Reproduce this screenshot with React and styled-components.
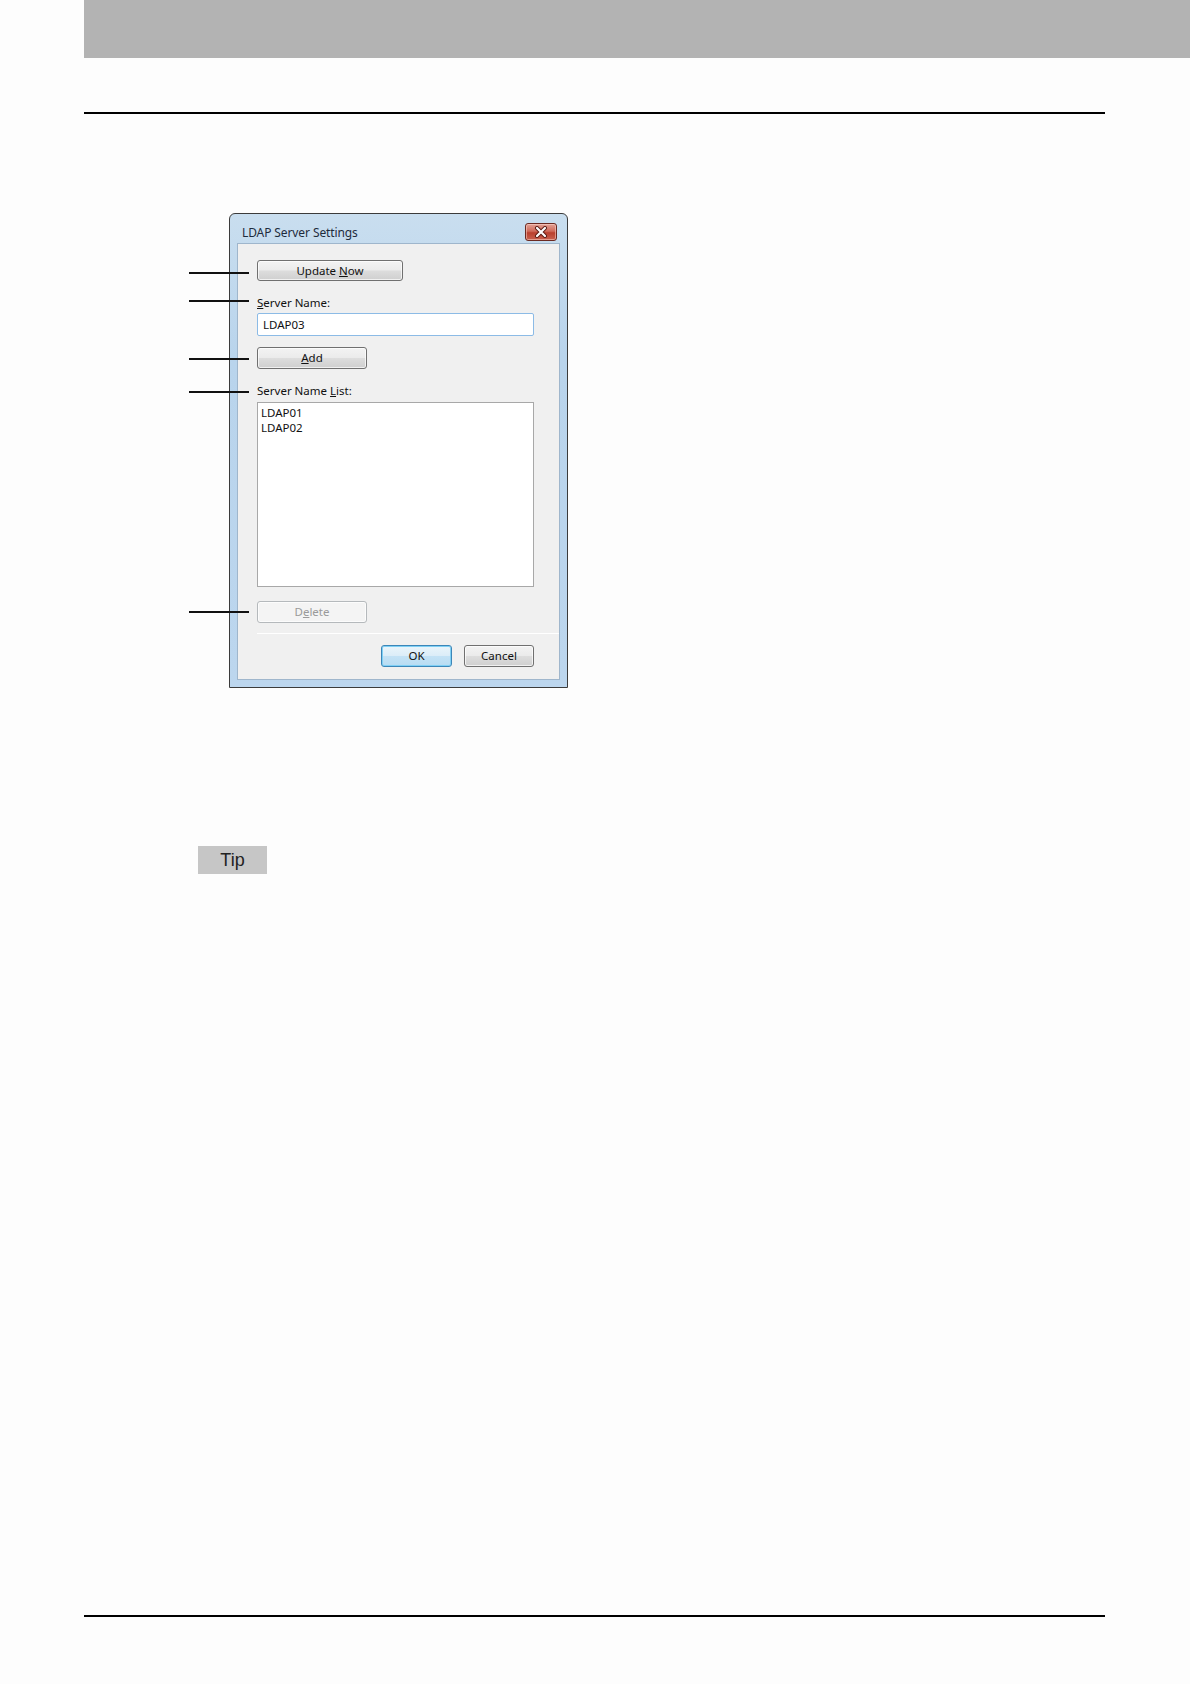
import React from "react";
import styled, { createGlobalStyle } from "styled-components";

const Global = createGlobalStyle`
  html, body {
    margin: 0;
    padding: 0;
    background: #fdfdfd;
  }
  * {
    box-sizing: border-box;
  }
`;

const Page = styled.div`
  width: 1190px;
  height: 1684px;
  padding-left: 84px;
  display: flex;
  flex-direction: column;
  font-family: "Liberation Sans", Arial, sans-serif;
`;

const HeaderBand = styled.div`
  height: 58px;
  background: #b3b3b3;
`;

const Rule = styled.div`
  width: 1021px;
  height: 2px;
  background: #000;
  margin-top: ${(p) => p.top || 0};
  margin-bottom: ${(p) => p.bottom || 0};
`;

const Figure = styled.div`
  position: relative;
  margin-top: 99px;
  padding-left: 145px;
`;

// callout leader lines laid over the dialog edge
const Leader = styled.div`
  position: absolute;
  left: 105px;
  width: 60px;
  height: 2px;
  background: #111;
  z-index: 2;
`;

const Window = styled.div`
  width: 339px;
  height: 475px;
  border: 1px solid #3b3b3b;
  border-radius: 6px 6px 0 0;
  background: linear-gradient(#c9deef, #b9d4ec 30%, #bcd6ee);
  padding: 0 7px 7px 7px;
  display: flex;
  flex-direction: column;
  font-family: "Noto Sans", "Open Sans", sans-serif;
`;

const TitleBar = styled.div`
  height: 29px;
  display: flex;
  align-items: flex-start;
  justify-content: space-between;
  padding: 0 3px 0 5px;
`;

const Title = styled.div`
  margin-top: 10px;
  font-size: 12px;
  color: #1e2b3c;
  letter-spacing: -0.1px;
`;

const Close = styled.div`
  margin-top: 9px;
  width: 32px;
  height: 18px;
  border: 1px solid #6b2a22;
  border-radius: 3px;
  background: linear-gradient(#e3a296, #cf6a5a 45%, #b9402e 55%, #c9614f);
  display: flex;
  align-items: center;
  justify-content: center;
  box-shadow: inset 0 0 0 1px rgba(255, 220, 210, 0.5);
`;

const Client = styled.div`
  flex: 1;
  background: #f0f0f0;
  border: 1px solid #9fb6cc;
  padding: 16px 0 0 19px;
  display: flex;
  flex-direction: column;
  align-items: flex-start;
  font-size: 11.5px;
  color: #111;
`;

const Button = styled.div`
  width: ${(p) => p.w}px;
  height: ${(p) => p.h || 22}px;
  margin-top: ${(p) => p.mt || 0}px;
  border: 1px solid ${(p) => (p.disabled ? "#b5b9bc" : p.focus ? "#3c86b8" : "#707070")};
  border-radius: 3px;
  background: ${(p) =>
    p.disabled
      ? "#f4f4f4"
      : p.focus
      ? "linear-gradient(#eaf5fb, #dcedf8 48%, #c3e2f5 52%, #b8dcf3)"
      : "linear-gradient(#f3f3f3, #ebebeb 48%, #dddddd 52%, #cfcfcf)"};
  box-shadow: ${(p) =>
    p.focus ? "inset 0 0 0 1px #7fd0f5" : "inset 0 0 0 1px rgba(255,255,255,0.7)"};
  color: ${(p) => (p.disabled ? "#9a9a9a" : "#111")};
  display: flex;
  align-items: center;
  justify-content: center;
  font-size: 11.5px;
  line-height: 1;
`;

const Label = styled.div`
  margin-top: ${(p) => p.mt}px;
  line-height: 16px;
`;

const Input = styled.div`
  margin-top: 2px;
  width: 277px;
  height: 23px;
  background: #fff;
  border: 1px solid #8cbbe6;
  border-radius: 2px;
  padding: 0 5px;
  display: flex;
  align-items: center;
`;

const ListBox = styled.div`
  margin-top: 3px;
  width: 277px;
  height: 185px;
  background: #fff;
  border: 1px solid #a8a8a8;
  padding: 2px 3px;
`;

const ListItem = styled.div`
  line-height: 15px;
`;

const Separator = styled.div`
  margin-top: 10px;
  align-self: stretch;
  height: 1px;
  background: #a0a0a0;
  border-bottom: 1px solid #fff;
`;

const Footer = styled.div`
  align-self: stretch;
  margin-top: 11px;
  padding-right: 25px;
  display: flex;
  justify-content: flex-end;
  gap: 12px;
`;

const Tip = styled.div`
  margin-top: 158px;
  margin-left: 114px;
  width: 69px;
  height: 28px;
  background: #c6c6c6;
  display: flex;
  align-items: center;
  justify-content: center;
  font-size: 18px;
  color: #222;
`;

const Spacer = styled.div`
  flex: 1;
`;

const leaders = [59, 87, 145, 178, 398];

export default function App() {
  return (
    <Page>
      <Global />
      <HeaderBand />
      <Rule top="54px" />
      <Figure>
        {leaders.map((t) => (
          <Leader key={t} style={{ top: t }} />
        ))}
        <Window>
          <TitleBar>
            <Title>LDAP Server Settings</Title>
            <Close>
              <svg width="14" height="12" viewBox="0 0 14 12">
                <path d="M3 2 L11 10 M11 2 L3 10" stroke="#5a1a12" strokeWidth="4" strokeLinecap="round" />
                <path d="M3 2 L11 10 M11 2 L3 10" stroke="#fff" strokeWidth="2.2" strokeLinecap="round" />
              </svg>
            </Close>
          </TitleBar>
          <Client>
            <Button w={146} h={21}>
              Update&nbsp;<u>N</u>ow
            </Button>
            <Label mt={14}>
              <u>S</u>erver Name:
            </Label>
            <Input>LDAP03</Input>
            <Button w={110} mt={11}>
              <u>A</u>dd
            </Button>
            <Label mt={14}>
              Server Name <u>L</u>ist:
            </Label>
            <ListBox>
              <ListItem>LDAP01</ListItem>
              <ListItem>LDAP02</ListItem>
            </ListBox>
            <Button w={110} mt={14} disabled>
              D<u>e</u>lete
            </Button>
            <Separator />
            <Footer>
              <Button w={71} focus>
                OK
              </Button>
              <Button w={70}>Cancel</Button>
            </Footer>
          </Client>
        </Window>
      </Figure>
      <Tip>Tip</Tip>
      <Spacer />
      <Rule bottom="67px" />
    </Page>
  );
}
